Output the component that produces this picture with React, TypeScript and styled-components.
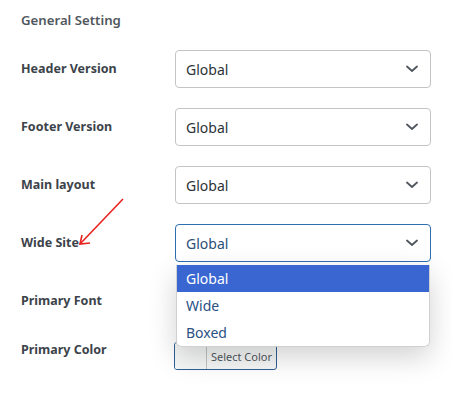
import React from 'react'
import styled, { createGlobalStyle } from 'styled-components'

const GlobalStyle = createGlobalStyle`
  body {
    margin: 0;
    background: #fff;
    font-family: 'Noto Sans', 'Open Sans', sans-serif;
  }
`

const options = ['Global', 'Wide', 'Boxed']

function Chevron () {
  return (
    <ChevronSvg width="12" height="8" viewBox="0 0 12 8">
      <path d="M1 1.5 L6 6 L11 1.5" fill="none" stroke="#50575e" strokeWidth="1.8" strokeLinecap="round" strokeLinejoin="round" />
    </ChevronSvg>
  )
}

function SelectBox ({ value, focused, children }: { value: string, focused?: boolean, children?: React.ReactNode }) {
  return (
    <SelectWrap>
      <Select $focused={focused}>
        <span>{value}</span>
        <Chevron />
      </Select>
      {children}
    </SelectWrap>
  )
}

export default function App () {
  return (
    <Page>
      <GlobalStyle />
      <Title>General Setting</Title>
      <Form>
        <Row>
          <Label>Header Version</Label>
          <SelectBox value="Global" />
        </Row>
        <Row>
          <Label>Footer Version</Label>
          <SelectBox value="Global" />
        </Row>
        <Row>
          <Label>Main layout</Label>
          <SelectBox value="Global" />
        </Row>
        <Row>
          <Label>
            Wide Site
            <Arrow width="60" height="60" viewBox="0 0 60 60">
              <path d="M57 1 L14 46" fill="none" stroke="#e8231f" strokeWidth="1.6" />
              <path d="M16 37 L14 46 L24 45" fill="none" stroke="#e8231f" strokeWidth="1.6" />
            </Arrow>
          </Label>
          <SelectBox value="Global" focused>
            <Menu>
              {options.map((o, i) => (
                <Option key={o} $active={i === 0}>{o}</Option>
              ))}
            </Menu>
          </SelectBox>
        </Row>
        <Row>
          <Label>Primary Font</Label>
        </Row>
        <ColorRow>
          <Label>Primary Color</Label>
          <ColorButton>
            <Swatch />
            <ColorText>Select Color</ColorText>
          </ColorButton>
        </ColorRow>
      </Form>
    </Page>
  )
}

const Page = styled.div`
  width: 452px;
  height: 395px;
  padding: 9px 21px 0 21px;
  box-sizing: border-box;
  overflow: hidden;
`
const Title = styled.div`
  font-size: 13.2px;
  font-weight: 600;
  color: #50575e;
  line-height: 22px;
`
const Form = styled.div`
  display: flex;
  flex-direction: column;
  gap: 20px;
  margin-top: 19px;
`
const Row = styled.div`
  display: flex;
  align-items: center;
  height: 38px;
`
const ColorRow = styled.div`
  display: flex;
  align-items: flex-start;
`
const Label = styled.div`
  position: relative;
  width: 154px;
  flex-shrink: 0;
  font-size: 12.5px;
  font-weight: 700;
  color: #3c434a;
  line-height: 20px;
`
const Arrow = styled.svg`
  position: absolute;
  left: 45px;
  top: -35px;
  overflow: visible;
`
const SelectWrap = styled.div`
  position: relative;
  width: 256px;
  height: 38px;
`
const Select = styled.div<{ $focused?: boolean }>`
  box-sizing: border-box;
  height: 100%;
  display: flex;
  align-items: center;
  justify-content: space-between;
  padding: 0 12px 0 10px;
  border: 1px solid ${p => (p.$focused ? '#2f6fb0' : '#c3c4c7')};
  border-radius: 4px;
  background: #fff;
  font-size: 14px;
  color: ${p => (p.$focused ? '#2a4f7a' : '#2c3338')};
`
const ChevronSvg = styled.svg`
  display: block;
`
const Menu = styled.div`
  position: absolute;
  left: 1px;
  right: 1px;
  top: 41px;
  z-index: 5;
  background: #fff;
  border-radius: 0 0 6px 6px;
  border: 1px solid #d0d0d0;
  border-top: none;
  box-shadow: 0 10px 28px rgba(0, 0, 0, 0.18);
  overflow: hidden;
`
const Option = styled.div<{ $active?: boolean }>`
  height: 27px;
  display: flex;
  align-items: center;
  padding-left: 9px;
  font-size: 14px;
  background: ${p => (p.$active ? '#3966d1' : '#fff')};
  color: ${p => (p.$active ? '#fff' : '#2a5185')};
`
const ColorButton = styled.div`
  display: flex;
  height: 28px;
  width: 103px;
  margin-left: -1px;
  margin-top: 2px;
  box-sizing: border-box;
  border: 1px solid #2f5f95;
  border-radius: 3px;
  overflow: hidden;
  background: #f6f7f7;
`
const Swatch = styled.div`
  width: 31px;
  border-right: 1px solid #c3c4c7;
  background: #f6f7f7;
`
const ColorText = styled.div`
  flex: 1;
  display: flex;
  align-items: center;
  justify-content: center;
  font-size: 11px;
  color: #50575e;
`
